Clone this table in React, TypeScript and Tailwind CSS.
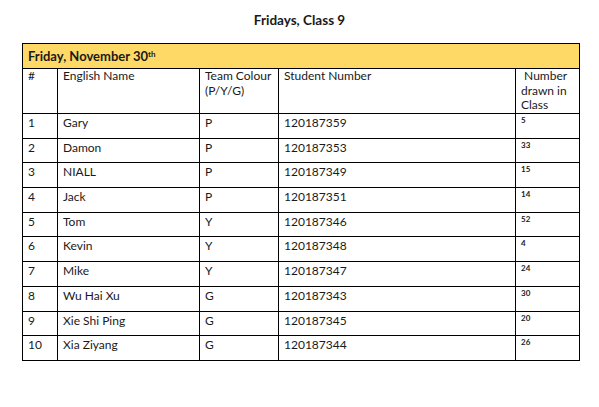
const rows = [
  { n: "1", name: "Gary", team: "P", id: "120187359", drawn: "5" },
  { n: "2", name: "Damon", team: "P", id: "120187353", drawn: "33" },
  { n: "3", name: "NIALL", team: "P", id: "120187349", drawn: "15" },
  { n: "4", name: "Jack", team: "P", id: "120187351", drawn: "14" },
  { n: "5", name: "Tom", team: "Y", id: "120187346", drawn: "52" },
  { n: "6", name: "Kevin", team: "Y", id: "120187348", drawn: "4" },
  { n: "7", name: "Mike", team: "Y", id: "120187347", drawn: "24" },
  { n: "8", name: "Wu Hai Xu", team: "G", id: "120187343", drawn: "30" },
  { n: "9", name: "Xie Shi Ping", team: "G", id: "120187345", drawn: "20" },
  { n: "10", name: "Xia Ziyang", team: "G", id: "120187344", drawn: "26" },
];

const cell = "border border-black px-[5px] pt-[1px] align-top";
const head = "border border-black px-[5px] pt-0 align-top leading-[14.5px]";

export default function App() {
  return (
    <div className="w-[599px] h-[407px] bg-white text-[#1a1a1a] font-['Lato','Open_Sans',sans-serif]">
      <h1 className="pt-[11px] text-center text-[13.5px] font-bold leading-[18px]">Fridays, Class 9</h1>
      <table className="mt-[14px] ml-[22px] w-[557px] table-fixed border-collapse text-[12px] leading-[15px]">
        <colgroup>
          <col className="w-[35px]" />
          <col className="w-[142px]" />
          <col className="w-[79px]" />
          <col className="w-[237px]" />
          <col className="w-[64px]" />
        </colgroup>
        <tbody>
          <tr className="h-[25px]">
            <td colSpan={5} className="border border-black bg-[#ffd966] px-[5px] align-middle text-[13px] font-bold leading-[16px]">
              Friday, November 30<sup className="text-[8px] leading-none">th</sup>
            </td>
          </tr>
          <tr className="h-[45px]">
            <td className={head}>#</td>
            <td className={head}>English Name</td>
            <td className={head}>Team Colour (P/Y/G)</td>
            <td className={head}>Student Number</td>
            <td className={head}>&nbsp;Number drawn in Class</td>
          </tr>
          {rows.map((r) => (
            <tr key={r.n} className="h-[24.7px]">
              <td className={cell}>{r.n}</td>
              <td className={cell}>{r.name}</td>
              <td className={cell}>{r.team}</td>
              <td className={cell}>{r.id}</td>
              <td className={`${cell} text-[8px] font-bold leading-[10px]`}>{r.drawn}</td>
            </tr>
          ))}
        </tbody>
      </table>
    </div>
  );
}
